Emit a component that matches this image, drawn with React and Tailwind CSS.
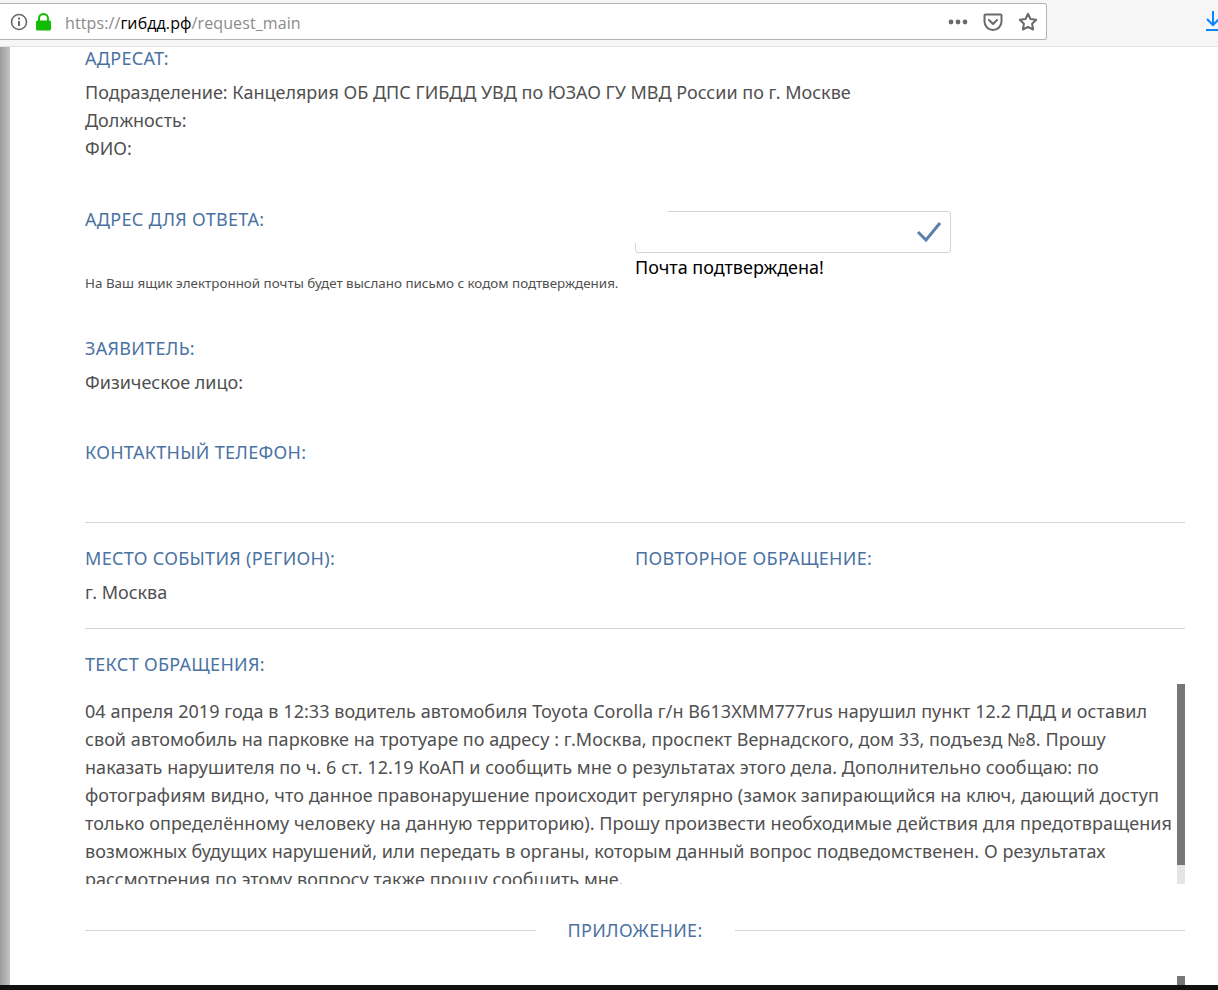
const font = "font-['Noto_Sans','Open_Sans',sans-serif]";

function Heading({ children, className = "" }) {
  return <div className={`text-[18px] leading-[28px] text-[#4a72a3] tracking-[0.3px] ${className}`}>{children}</div>;
}

function BrowserBar() {
  return (
    <div className="relative z-10 flex h-[47px] shrink-0 bg-[#f6f6f6] border-b border-[#e2e2e2]">
      <div className="mt-[3px] flex h-[37px] w-[1047px] shrink-0 items-center rounded-r-[3px] border border-l-0 border-[#b4b4b4] bg-white">
        <svg className="ml-[10px]" width="18" height="18" viewBox="0 0 18 18" fill="none">
          <circle cx="9" cy="9" r="7.5" stroke="#6a6a6a" strokeWidth="1.6" />
          <rect x="8" y="8" width="2" height="5" fill="#6a6a6a" />
          <rect x="8" y="4.6" width="2" height="2" fill="#6a6a6a" />
        </svg>
        <svg className="ml-[7px]" width="17" height="18" viewBox="0 0 17 18" fill="none">
          <path d="M4 8V5.500a4.500 4.500 0 0 1 9 0V8" stroke="#12bc00" strokeWidth="2" />
          <rect x="1" y="7.500" width="15" height="10" rx="1.500" fill="#12bc00" />
        </svg>
        <div className="ml-[13px] pt-[2px] font-['Open_Sans',sans-serif] text-[16px] tracking-[0.1px] text-[#8b8b8b]">
          https://<span className="text-black">гибдд.рф</span>/request_main
        </div>
        <div className="ml-auto flex items-center">
          <svg width="20" height="6" viewBox="0 0 20 6" fill="#6a6a6a">
            <circle cx="3" cy="3" r="2.400" />
            <circle cx="10" cy="3" r="2.400" />
            <circle cx="17" cy="3" r="2.400" />
          </svg>
          <svg className="ml-[15px]" width="20" height="18" viewBox="0 0 20 18" fill="none" stroke="#6a6a6a" strokeWidth="2">
            <path d="M2.500 1.500h15a1 1 0 0 1 1 1v6a8.500 8.500 0 0 1-17 0v-6a1 1 0 0 1 1-1z" />
            <path d="M6 7l4 4 4-4" strokeLinecap="round" strokeLinejoin="round" />
          </svg>
          <svg className="ml-[15px] mr-[8px]" width="20" height="19" viewBox="0 0 20 19" fill="none" stroke="#6a6a6a" strokeWidth="2" strokeLinejoin="round">
            <path d="M10 1.800l2.500 5.200 5.700.8-4.100 4 1 5.700-5.100-2.700-5.100 2.700 1-5.700-4.100-4 5.700-.8z" />
          </svg>
        </div>
      </div>
      <svg className="ml-[158px] mt-[11px] shrink-0" width="15" height="20" viewBox="0 0 15 20" fill="none" stroke="#0a84ff" strokeWidth="2">
        <path d="M8 0v14M2 8l6 6 6-6" />
        <path d="M1 19h14" />
      </svg>
    </div>
  );
}

export default function App() {
  return (
    <div className={`flex h-[990px] w-[1218px] flex-col overflow-hidden bg-white ${font}`}>
      <BrowserBar />
      <div className="flex min-h-0 flex-1">
        <div className="w-[10px] shrink-0 bg-gradient-to-r from-[#9c9c9c] to-[#c4c4c4]" />
        <div className="w-[1175px] pl-[75px] text-[18px] leading-[28px] text-[#505050]">
          <Heading className="-mt-[3px]">АДРЕСАТ:</Heading>
          <div className="mt-[6px]">Подразделение: Канцелярия ОБ ДПС ГИБДД УВД по ЮЗАО ГУ МВД России по г. Москве</div>
          <div>Должность:</div>
          <div>ФИО:</div>

          <div className="mt-[49px] flex">
            <div className="w-[550px]">
              <Heading className="-mt-[6px]">АДРЕС ДЛЯ ОТВЕТА:</Heading>
              <div className="mt-[41px] whitespace-nowrap text-[13.400px] leading-[18px]">На Ваш ящик электронной почты будет выслано письмо с кодом подтверждения.</div>
            </div>
            <div className="w-[316px]">
              <div className="relative flex h-[42px] items-center justify-end rounded-[3px] border border-[#d4d4d4] pr-[8px]">
                <div className="absolute -left-px -top-px h-[32px] w-[33px] bg-white" />
                <svg width="26" height="22" viewBox="0 0 26 22" fill="none" stroke="#5b80ad" strokeWidth="3">
                  <path d="M2 11l8 8L24 2" />
                </svg>
              </div>
              <div className="text-black">Почта подтверждена!</div>
            </div>
          </div>

          <Heading className="mt-[42px]">ЗАЯВИТЕЛЬ:</Heading>
          <div className="mt-[6px]">Физическое лицо:</div>

          <Heading className="mt-[42px]">КОНТАКТНЫЙ ТЕЛЕФОН:</Heading>

          <div className="mt-[56px] flex border-t border-[#d4d4d4] pt-[21px]">
            <div className="w-[550px]">
              <Heading>МЕСТО СОБЫТИЯ (РЕГИОН):</Heading>
              <div className="mt-[6px]">г. Москва</div>
            </div>
            <Heading>ПОВТОРНОЕ ОБРАЩЕНИЕ:</Heading>
          </div>

          <div className="mt-[22px] border-t border-[#d4d4d4] pt-[21px]">
            <Heading>ТЕКСТ ОБРАЩЕНИЯ:</Heading>
            <div className="relative mt-[6px] h-[200px] overflow-hidden">
              <div className="pr-[10px] pt-[13px] tracking-[0.05px]">
                04 апреля 2019 года в 12:33 водитель автомобиля Toyota Corolla г/н В613ХММ777rus нарушил пункт 12.2 ПДД и оставил свой автомобиль на парковке на тротуаре по адресу : г.Москва, проспект Вернадского, дом 33, подъезд №8. Прошу наказать нарушителя по ч. 6 ст. 12.19 КоАП и сообщить мне о результатах этого дела. Дополнительно сообщаю: по фотографиям видно, что данное правонарушение происходит регулярно (замок запирающийся на ключ, дающий доступ только определённому человеку на данную территорию). Прошу произвести необходимые действия для предотвращения возможных будущих нарушений, или передать в органы, которым данный вопрос подведомственен. О результатах рассмотрения по этому вопросу также прошу сообщить мне.
              </div>
              <div className="absolute right-0 top-0 h-[200px] w-[8px] bg-[#e5e5e5]">
                <div className="h-[181px] bg-[#767676]" />
              </div>
            </div>
          </div>

          <div className="mt-[32px] flex items-center">
            <div className="h-px flex-1 bg-[#d4d4d4]" />
            <Heading className="mx-[32px]">ПРИЛОЖЕНИЕ:</Heading>
            <div className="h-px flex-1 bg-[#d4d4d4]" />
          </div>

          <div className="mt-[32px] flex justify-end">
            <div className="h-[9px] w-[8px] bg-[#767676]" />
          </div>
        </div>
      </div>
      <div className="h-[5px] shrink-0 bg-[#111]" />
    </div>
  );
}
